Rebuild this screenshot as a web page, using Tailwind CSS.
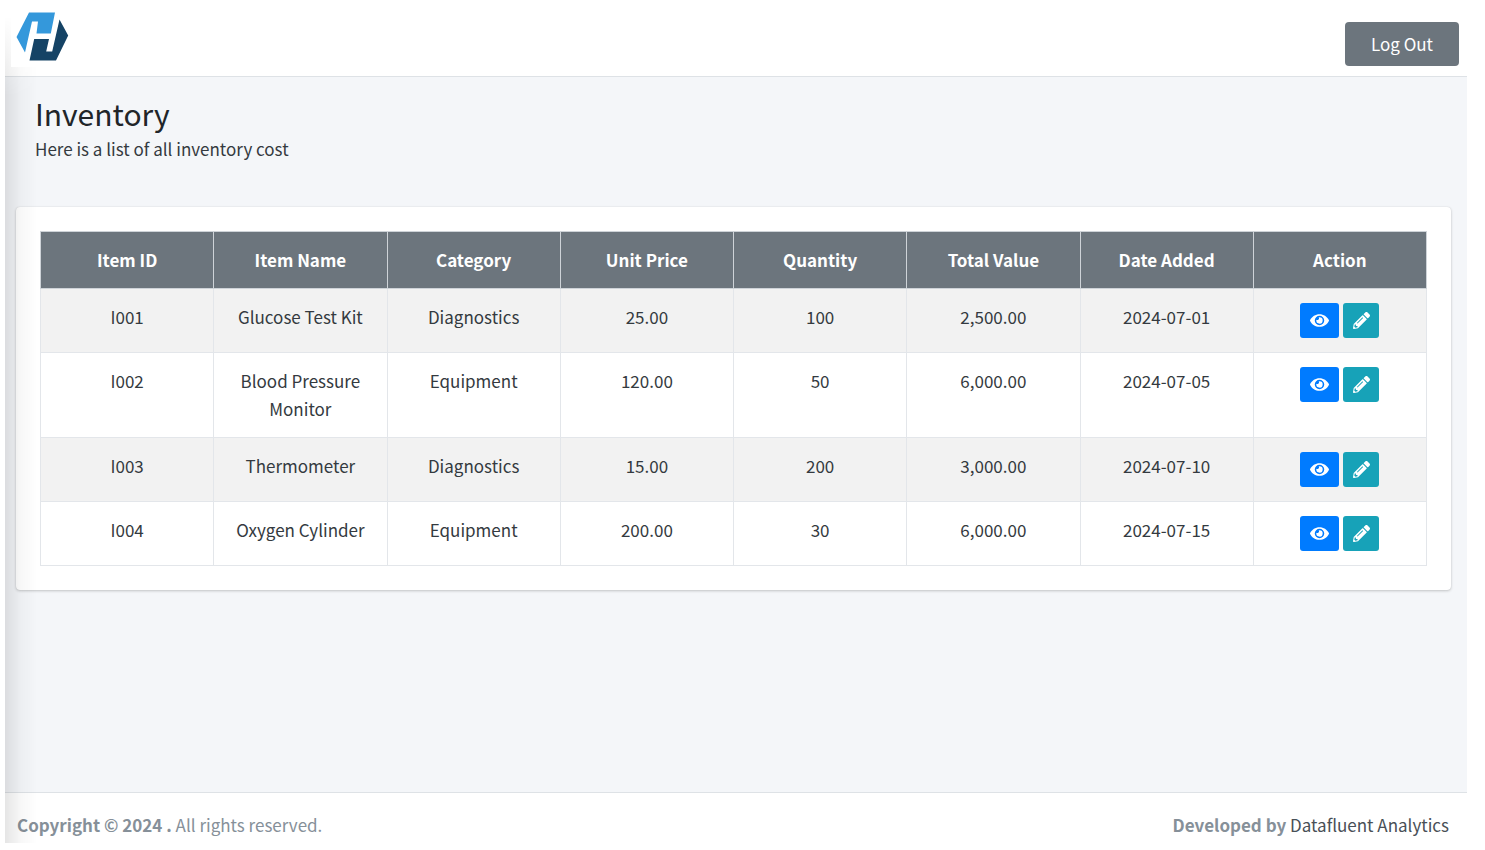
<!DOCTYPE html>
<html lang="en">
<head>
<meta charset="utf-8">
<meta name="viewport" content="width=device-width, initial-scale=1">
<title>Inventory</title>
<script src="https://cdn.jsdelivr.net/npm/@tailwindcss/browser@4"></script>
</head>
<body class="bg-white font-['Noto_Sans_CJK_SC','Noto_Sans',sans-serif] text-[17px] leading-7 text-[#212529]">
<svg class="hidden" aria-hidden="true">
  <symbol id="eye" viewBox="0 0 576 512"><path fill="currentColor" d="M572.52 241.4C518.29 135.59 410.93 64 288 64S57.68 135.64 3.48 241.41a32.35 32.35 0 0 0 0 29.19C57.71 376.41 165.07 448 288 448s230.32-71.64 284.52-177.41a32.35 32.35 0 0 0 0-29.19zM288 400a144 144 0 1 1 144-144 143.93 143.93 0 0 1-144 144zm0-240a95.31 95.31 0 0 0-25.31 3.79 47.85 47.85 0 0 1-66.9 66.9A95.78 95.78 0 1 0 288 160z"/></symbol>
  <symbol id="pencil" viewBox="0 0 512 512"><path fill="currentColor" d="M497.9 142.1l-46.1 46.1c-4.700 4.700-12.300 4.700-17 0l-111-111c-4.700-4.700-4.700-12.300 0-17l46.100-46.100c18.700-18.700 49.100-18.700 67.900 0l60.100 60.100c18.800 18.700 18.800 49.100 0 67.900zM284.200 99.800L21.600 362.400.4 483.900c-2.900 16.400 11.400 30.600 27.800 27.800l121.500-21.300 262.600-262.600c4.700-4.700 4.700-12.300 0-17l-111-111c-4.800-4.700-12.400-4.700-17.100 0zM124.100 339.900c-5.500-5.500-5.500-14.300 0-19.800l154-154c5.500-5.500 14.300-5.500 19.800 0s5.500 14.300 0 19.800l-154 154c-5.500 5.500-14.300 5.500-19.800 0zM88 424h48v36.300l-64.500 11.300-31.100-31.100L51.700 376H88v48z"/></symbol>
</svg>
<div class="flex min-h-screen flex-col pr-[18px] pb-[7px] pl-[5px]">
  <div class="relative flex grow flex-col">
    <div class="pointer-events-none absolute top-4 bottom-0 left-0 z-10 w-8 bg-linear-to-r from-black/10 via-black/3 to-transparent mask-t-from-[calc(100%-80px)]"></div>

    <header class="flex items-start justify-between border-b border-[#dee2e6] pr-2 pb-[9px] pl-[6px]">
      <a href="#" aria-label="Home" class="relative z-20 block bg-white pt-3 pl-[5px]">
        <svg class="mb-[6px] h-[49px] w-[53px]" viewBox="0 0 53 49" aria-hidden="true">
          <path fill="#3498db" d="M13 .5H39L34.800 21.500H20.500L22 9.500H16L9 40.500 .5 25z"/>
          <path fill="#154365" d="M43.500 7.500 52.200 23.500 40 48.500H13.500L18.200 27H33L30.200 39.500H36.200z"/>
        </svg>
      </a>
      <button type="button" class="mt-[22px] h-11 cursor-pointer rounded bg-[#6c757d] px-[26px] text-white">Log Out</button>
    </header>

    <main class="grow bg-[#f4f6f9] pr-4 pl-[11px]">
      <div class="px-[19px] pt-4">
        <h1 class="text-[30px] leading-10">Inventory</h1>
        <p class="leading-8 text-[#343a40]">Here is a list of all inventory cost</p>
      </div>
      <section class="mt-[42px] rounded bg-white p-6 shadow-[0_0_1px_rgba(0,0,0,.13),0_1px_3px_rgba(0,0,0,.2)]">
        <table class="w-full table-fixed border-collapse text-center text-[#343a40] [&_td]:border [&_td]:border-[#e3e6ea] [&_td]:px-3 [&_td]:py-[14px] [&_td]:align-top [&_th]:border [&_th]:border-[#ced3d8] [&_th]:px-3 [&_th]:py-[14px]">
          <thead class="bg-[#6c757d] text-white">
            <tr><th scope="col">Item ID</th><th scope="col">Item Name</th><th scope="col">Category</th><th scope="col">Unit Price</th><th scope="col">Quantity</th><th scope="col">Total Value</th><th scope="col">Date Added</th><th scope="col">Action</th></tr>
          </thead>
          <tbody id="rows" class="[&>tr:nth-child(odd)]:bg-[#f2f2f2]"></tbody>
        </table>
      </section>
    </main>

    <footer class="flex justify-between border-t border-[#dee2e6] pt-[18px] pr-[18px] pb-1 pl-3 text-[#869099]">
      <p><strong>Copyright © 2024 .</strong> All rights reserved.</p>
      <p><strong>Developed by</strong> <a href="#" class="text-[#495057]">Datafluent Analytics</a></p>
    </footer>
  </div>
</div>
<script>
  const items = [
    ['I001', 'Glucose Test Kit', 'Diagnostics', '25.00', '100', '2,500.00', '2024-07-01'],
    ['I002', 'Blood Pressure Monitor', 'Equipment', '120.00', '50', '6,000.00', '2024-07-05'],
    ['I003', 'Thermometer', 'Diagnostics', '15.00', '200', '3,000.00', '2024-07-10'],
    ['I004', 'Oxygen Cylinder', 'Equipment', '200.00', '30', '6,000.00', '2024-07-15'],
  ];
  const actions = id => `<td><div class="flex justify-center gap-1">
    <button type="button" aria-label="View ${id}" class="flex h-[35px] w-[39px] cursor-pointer items-center justify-center rounded-[3px] bg-[#007bff] text-white"><svg class="h-[17px] w-[19px]"><use href="#eye"/></svg></button>
    <button type="button" aria-label="Edit ${id}" class="flex h-[35px] w-9 cursor-pointer items-center justify-center rounded-[3px] bg-[#17a2b8] text-white"><svg class="h-[17px] w-[17px]"><use href="#pencil"/></svg></button>
  </div></td>`;
  document.getElementById('rows').innerHTML = items
    .map(r => `<tr>${r.map(c => `<td>${c}</td>`).join('')}${actions(r[0])}</tr>`).join('');
</script>
</body>
</html>
